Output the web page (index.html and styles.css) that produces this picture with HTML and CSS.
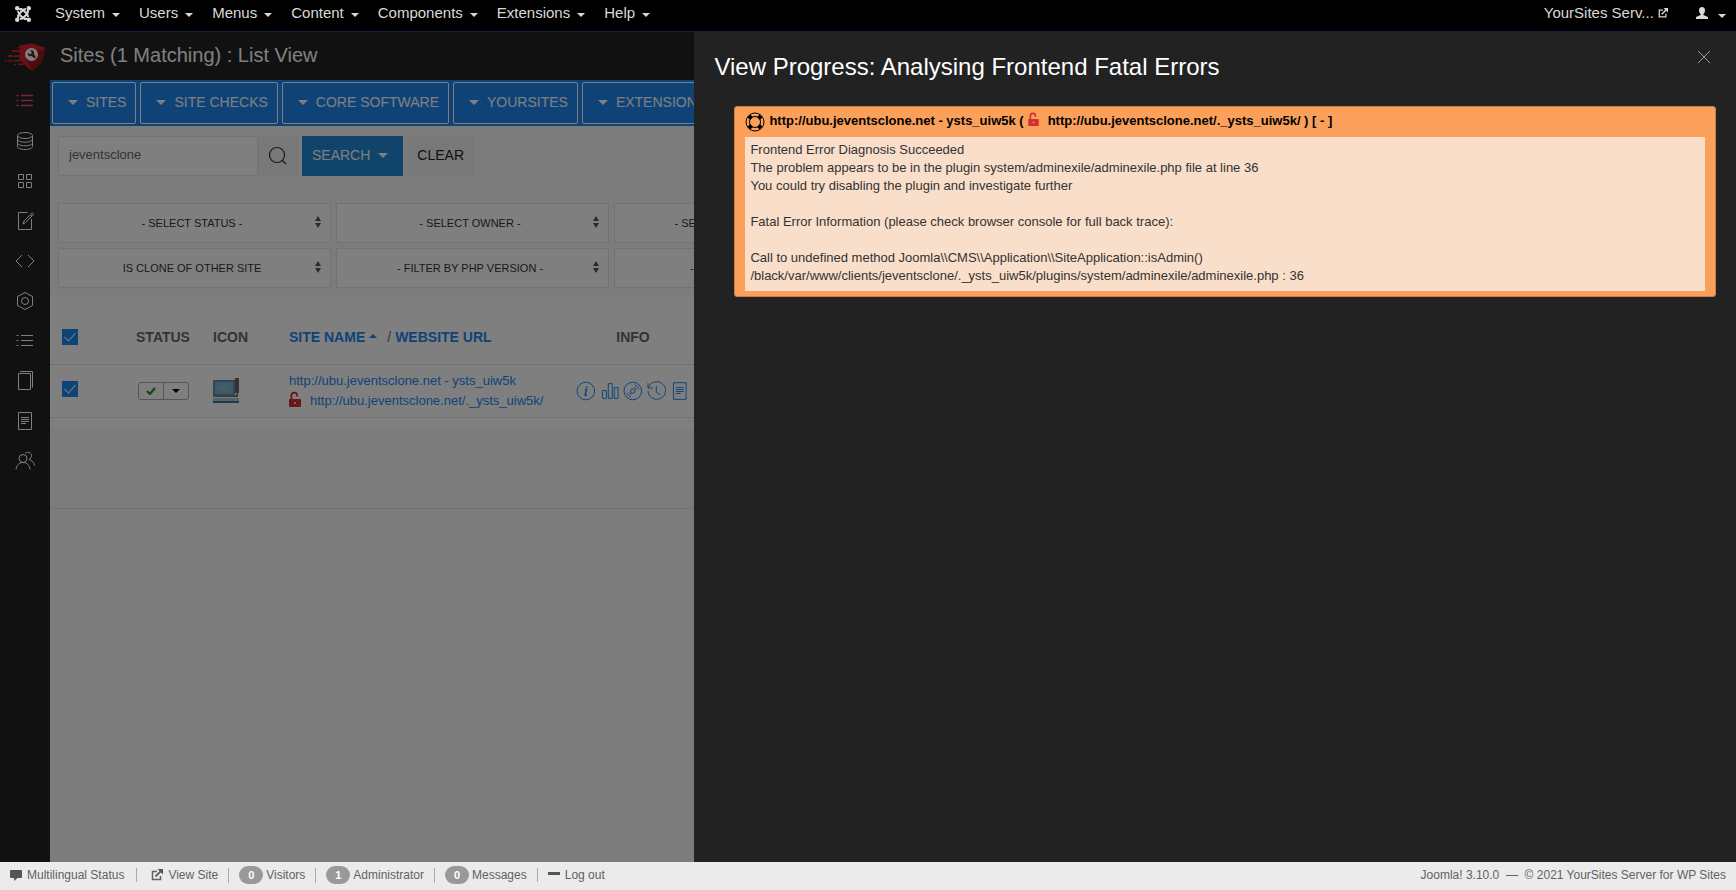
FILE: index.html
```html
<!DOCTYPE html>
<html lang="en">
<head>
  <meta charset="UTF-8" />
  <meta name="viewport" content="width=device-width, initial-scale=1.0"/>
  <title>Sites : List View</title>
  <link rel="stylesheet" href="styles.css">
</head>
<body>

<!-- shared icons -->
<svg class="sprite" aria-hidden="true">
  <symbol id="i-list" viewBox="0 0 20 20"><path d="M6 4.500h12M6 9.500h12M6 14.500h12M1.500 4.500h2M1.500 9.500h2M1.500 14.500h2"/></symbol>
  <symbol id="i-doc" viewBox="0 0 20 20"><path d="M3.500 1.500h13v17h-13zM6 6.500h8M6 8.500h8M6 10.500h8M6 12.500h5"/></symbol>
  <symbol id="i-lock" viewBox="0 0 12 16"><path d="M1.500 8V4.500a3.800 3.800 0 0 1 7.600 0v1H7.300v-1a2 2 0 0 0-4 0V8H11a1 1 0 0 1 1 1v6a1 1 0 0 1-1 1H1a1 1 0 0 1-1-1V9a1 1 0 0 1 1-1zm3.700 3v1.800h1.600V11z"/></symbol>
  <symbol id="i-out" viewBox="0 0 12 12"><path d="M6 2.500H1.500v8h8V7" fill="none" stroke="currentColor" stroke-width="1.500"/><path d="M4.500 7.500 9.500 2.500" stroke="currentColor" stroke-width="1.800"/><path d="M6.500 0H12v5.500z"/></symbol>
  <symbol id="i-updown" viewBox="0 0 6 12"><path d="M3 0l3 5H0zM3 12l3-5H0z"/></symbol>
</svg>

<header class="topbar">
  <a class="brand" href="#" aria-label="Joomla">
    <svg viewBox="0 0 16 16" width="16" height="16" fill="none" stroke="currentColor">
      <path d="M3 5c0 2 .5 2.500 2 4l4 4M13 11c0-2-.5-2.500-2-4L7 3M5 13c2 0 2.500-.5 4-2l4-4M11 3C9 3 8.500 3.500 7 5L3 9" stroke-width="1.800"/>
      <path d="M2 2l4 2M14 2l-2 4M14 14l-4-2M2 14l2-4M5 3h2M13 5v2M11 13H9M3 11V9" stroke-width="1.800"/>
      <g fill="currentColor" stroke="none"><circle cx="2.200" cy="2.200" r="2.200"/><circle cx="13.800" cy="2.200" r="2.200"/><circle cx="2.200" cy="13.800" r="2.200"/><circle cx="13.800" cy="13.800" r="2.200"/></g>
    </svg>
  </a>
  <nav class="menu">
    <a href="#">System<i class="caret"></i></a>
    <a href="#">Users<i class="caret"></i></a>
    <a href="#">Menus<i class="caret"></i></a>
    <a href="#">Content<i class="caret"></i></a>
    <a href="#">Components<i class="caret"></i></a>
    <a href="#">Extensions<i class="caret"></i></a>
    <a href="#">Help<i class="caret"></i></a>
  </nav>
  <div class="topbar-right">
    <a href="#">YourSites Serv... <svg class="out" width="10" height="10"><use href="#i-out"/></svg></a>
    <a class="user" href="#" aria-label="User menu">
      <svg viewBox="0 0 12 12" width="12" height="12"><path d="M6 0c2 0 3 1.300 3 3.200C9 5 8.300 6.300 7.400 7v1L12 10v2H0v-2l4.600-2V7C3.700 6.300 3 5 3 3.200 3 1.300 4 0 6 0z"/></svg>
      <i class="caret"></i>
    </a>
  </div>
</header>

<div class="page">
  <aside class="sidebar">
    <a class="logo" href="#" aria-label="YourSites">
      <svg viewBox="0 0 40 28" width="40" height="28">
        <path d="M27 0c4 2 8 3.500 12.500 4C40 14 36 23 27 27.500c-3-1.500-5-3.500-6.500-5.500H13v-1.500h5l-1-2H8V17h7l-1-3H9v-2h6l-1-3H7V7h8V5.500h-2V4h2V1.500C19 2 23 1.500 27 0z" fill="#d2232d"/>
        <path d="M0 17h2v1.500H0zM3.500 17H7v1.500H3.500zM3 12h5v2H3zM9 21h2v1.500H9z" fill="#d2232d"/>
        <path d="M31.500 8l8-1c-.5 9-5 17-12.500 20.500L20.500 16z" fill="#9b1620"/>
        <circle cx="26.500" cy="11.500" r="6.500" fill="#fff"/>
        <path d="M23 9.500l2 2 2-2-2-2c3-1 5 1.500 4 3.500l2 3-1.500 1.500-3-2.500c-2.500 1-4.500-1-3.500-3.500z" fill="#7a2028"/>
      </svg>
    </a>
    <a class="active" href="#" aria-label="Sites"><svg><use href="#i-list"/></svg></a>
    <a href="#" aria-label="Servers"><svg viewBox="0 0 20 20"><ellipse cx="10" cy="4.500" rx="7.500" ry="3"/><path d="M2.500 4.500v11c0 1.700 3.400 3 7.500 3s7.500-1.300 7.500-3v-11M2.500 8.200c0 1.700 3.400 3 7.500 3s7.500-1.300 7.500-3M2.500 11.800c0 1.700 3.400 3 7.500 3s7.500-1.300 7.500-3"/></svg></a>
    <a href="#" aria-label="Extensions"><svg viewBox="0 0 20 20"><path d="M3.500 3.500h5v5h-5zM11.500 3.500h5v5h-5zM3.500 11.500h5v5h-5zM11.500 11.500h5v5h-5z"/></svg></a>
    <a href="#" aria-label="Edit"><svg viewBox="0 0 20 20"><path d="M12.500 1.500h-9v17h13V8M8 13l1.200-3.200 8-8 1.500 1.500-8 8zM15.500 3.500 17 5"/></svg></a>
    <a href="#" aria-label="Code"><svg viewBox="0 0 20 20"><path d="M7 4 1 10l6 6M13 4l6 6-6 6"/></svg></a>
    <a href="#" aria-label="Settings"><svg viewBox="0 0 20 20"><path d="M10 1.500l7.500 4v9l-7.500 4-7.500-4v-9z"/><circle cx="10" cy="10" r="3.500"/></svg></a>
    <a href="#" aria-label="Logs"><svg><use href="#i-list"/></svg></a>
    <a href="#" aria-label="Copies"><svg viewBox="0 0 20 20"><path d="M3.500 2.500h12v16h-12zM5 .5h12.500v16"/></svg></a>
    <a href="#" aria-label="Reports"><svg><use href="#i-doc"/></svg></a>
    <a href="#" aria-label="Users"><svg viewBox="0 0 20 20"><circle cx="8" cy="7.500" r="4"/><path d="M1 18.500c.5-4 3-7 7-7s6.500 3 7 7M10 2.500c1.500-2 6.500-1.500 6.500 2 0 2-1 3-2.500 4 3 .7 5 3 5.500 6"/></svg></a>
  </aside>

  <main class="content">
    <h1>Sites (1 Matching) : List View</h1>

    <div class="toolbar">
      <button><i class="arrow"></i>SITES</button>
      <button><i class="arrow"></i>SITE CHECKS</button>
      <button><i class="arrow"></i>CORE SOFTWARE</button>
      <button><i class="arrow"></i>YOURSITES</button>
      <button><i class="arrow"></i>EXTENSIONS</button>
    </div>

    <form class="search">
      <input type="text" aria-label="Search" value="jeventsclone">
      <button type="button" class="glass" aria-label="Find"><svg viewBox="0 0 20 20" width="20" height="20"><circle cx="9" cy="9" r="7.500"/><path d="M14 14l4 4"/></svg></button>
      <button type="button" class="go">SEARCH<i class="arrow"></i></button>
      <button type="button" class="clear">CLEAR</button>
    </form>

    <div class="filters">
      <label><select aria-label="Status"><option>- SELECT STATUS -</option></select><svg><use href="#i-updown"/></svg></label>
      <label><select aria-label="Owner"><option>- SELECT OWNER -</option></select><svg><use href="#i-updown"/></svg></label>
      <label><select aria-label="Category"><option>- SELECT SITE CATEGORY -</option></select><svg><use href="#i-updown"/></svg></label>
      <label><select aria-label="Clone"><option>IS CLONE OF OTHER SITE</option></select><svg><use href="#i-updown"/></svg></label>
      <label><select aria-label="PHP version"><option>- FILTER BY PHP VERSION -</option></select><svg><use href="#i-updown"/></svg></label>
      <label><select aria-label="Template"><option>- SELECT TEMPLATE -</option></select><svg><use href="#i-updown"/></svg></label>
    </div>

    <div class="list">
      <table>
        <thead>
          <tr>
            <th class="c-check"><input type="checkbox" aria-label="Select all" checked></th>
            <th class="c-status">STATUS</th>
            <th class="c-icon">ICON</th>
            <th class="c-name"><a href="#">SITE NAME<i class="up"></i></a><span class="slash">/</span><a href="#">WEBSITE URL</a></th>
            <th class="c-info">INFO</th>
            <th></th>
          </tr>
        </thead>
        <tbody>
          <tr>
            <td class="c-check"><input type="checkbox" aria-label="Select site" checked></td>
            <td class="c-status">
              <div class="state">
                <button aria-label="Enabled"><svg viewBox="0 0 10 8" width="10" height="8"><path d="M1 4l3 3 5-6" fill="none" stroke="#2b8a2b" stroke-width="2.200"/></svg></button>
                <button aria-label="More"><i class="caret"></i></button>
              </div>
            </td>
            <td class="c-icon">
              <svg viewBox="0 0 26 26" width="26" height="26">
                <path d="M22 0h4v15h-4z" fill="#666"/>
                <path d="M0 2h22v17H0z" fill="#5c8fb0"/>
                <path d="M2 4h18v12H2z" fill="#81b2cf"/>
                <path d="M4 8h2M9 8h2M14 8h2M6 11h8" stroke="#a9cbdd"/>
                <path d="M3 18h19l3-4v5H3z" fill="#706a66"/>
                <path d="M0 20h26v3H0z" fill="#a9c4d4"/>
                <path d="M0 23h26v2H0z" fill="#427494"/>
              </svg>
            </td>
            <td class="c-name">
              <a href="#">http://ubu.jeventsclone.net - ysts_uiw5k</a>
              <a href="#"><svg class="lock" width="12" height="16"><use href="#i-lock"/></svg>http://ubu.jeventsclone.net/._ysts_uiw5k/</a>
            </td>
            <td class="c-info">
              <div class="tools">
                <svg viewBox="0 0 20 20"><circle cx="10" cy="10" r="9"/><path d="M9 8.500h1.700L9.300 14c-.2.700.5.700 1.700-.3M11 5.200v1.600" stroke-width="1.600"/></svg>
                <svg viewBox="0 0 20 20"><path d="M2.500 9.500h4v8h-4zM8.500 2.500h4v15h-4zM14.500 6.500h4v11h-4z"/></svg>
                <svg viewBox="0 0 20 20"><circle cx="10" cy="10" r="9"/><circle cx="10" cy="10" r="2.200"/><path d="M11.500 6.500c1 .2 1.900 1 2.200 2.100M12 4c2 .5 3.500 2 4.200 4M8.500 13.500c-1-.2-1.900-1-2.200-2.100M8 16c-2-.5-3.500-2-4.200-4"/></svg>
                <svg viewBox="0 0 20 20"><path d="M1 2v5h5M1.500 6.500A9 9 0 1 1 1 10M9.500 5v6l4 3"/></svg>
                <svg viewBox="0 0 20 20"><use href="#i-doc"/></svg>
              </div>
            </td>
            <td></td>
          </tr>
        </tbody>
      </table>
    </div>
    <div class="pager"></div>
  </main>

  <div class="backdrop"></div>

  <section class="drawer" role="dialog" aria-labelledby="drawer-title">
    <button class="close" aria-label="Close"><svg viewBox="0 0 14 14" width="14" height="14"><path d="M1 1l12 12M13 1 1 13"/></svg></button>
    <h2 id="drawer-title">View Progress: Analysing Frontend Fatal Errors</h2>
    <div class="card">
      <div class="card-title">
        <svg class="ring" viewBox="0 0 20 20" width="20" height="20" fill="none" stroke="#000">
          <circle cx="10" cy="10" r="9"/><circle cx="10" cy="10" r="5.500"/>
          <g stroke-width="4"><path d="M4 4l2.500 2.500M16 4l-2.500 2.500M4 16l2.500-2.500M16 16l-2.500-2.500"/></g>
        </svg>
        <strong>http://ubu.jeventsclone.net - ysts_uiw5k (<svg class="lock" width="11" height="14"><use href="#i-lock"/></svg>http://ubu.jeventsclone.net/._ysts_uiw5k/ ) [ - ]</strong>
      </div>
      <div class="card-body">
        Frontend Error Diagnosis Succeeded<br>
        The problem appears to be in the plugin system/adminexile/adminexile.php file at line 36<br>
        You could try disabling the plugin and investigate further<br>
        <br>
        Fatal Error Information (please check browser console for full back trace):<br>
        <br>
        Call to undefined method Joomla\\CMS\\Application\\SiteApplication::isAdmin()<br>
        /black/var/www/clients/jeventsclone/._ysts_uiw5k/plugins/system/adminexile/adminexile.php : 36
      </div>
    </div>
  </section>
</div>

<footer class="statusbar">
  <a href="#"><svg viewBox="0 0 12 12" width="12" height="12"><path d="M1 1h10a1 1 0 0 1 1 1v6a1 1 0 0 1-1 1H7.500L4 12V9H1a1 1 0 0 1-1-1V2a1 1 0 0 1 1-1z"/></svg>Multilingual Status</a>
  <a class="view" href="#"><svg width="12" height="12"><use href="#i-out"/></svg>View Site</a>
  <span><b>0</b>Visitors</span>
  <span><b>1</b>Administrator</span>
  <a href="#"><b>0</b>Messages</a>
  <a href="#"><svg viewBox="0 0 12 12" width="12" height="12"><path d="M0 3h12v3H0z"/></svg>Log out</a>
  <p>Joomla! 3.10.0 &nbsp;—&nbsp; © 2021 YourSites Server for WP Sites</p>
</footer>

</body>
</html>
```
FILE: styles.css
```css
* {
  box-sizing: border-box;
}
body {
  margin: 0;
  height: 100vh;
  display: flex;
  flex-direction: column;
  overflow: hidden;
  font-family: "Liberation Sans", Arial, sans-serif;
  font-size: 13px;
  color: #333;
}
a {
  color: inherit;
  text-decoration: none;
}
button, input, select {
  font-family: inherit;
  margin: 0;
}
button {
  cursor: pointer;
}
.sprite {
  position: absolute;
  width: 0;
  height: 0;
}
.caret {
  display: inline-block;
  border: 4px solid transparent;
  border-top-color: currentColor;
  border-bottom: 0;
}
.arrow {
  display: inline-block;
  border: 5px solid transparent;
  border-top-color: currentColor;
  border-bottom: 0;
}

/* top menu */
.topbar {
  flex: none;
  height: 32px;
  display: flex;
  align-items: center;
  padding: 0 6px 6px 15px;
  background: #000;
  border-bottom: 1px solid #10203a;
  color: #d9d9d9;
  fill: currentColor;
  font-size: 15px;
}
.brand {
  display: flex;
  margin: 3px 24px 0 0;
}
.menu {
  display: flex;
  gap: 19px;
  flex: 1;
}
.menu .caret {
  margin: 0 0 1px 7px;
}
.topbar-right {
  display: flex;
  align-items: center;
  gap: 28px;
}
.user {
  display: flex;
  align-items: flex-end;
  gap: 10px;
}
.user .caret {
  margin: 0 4px 1px 0;
}

/* page */
.page {
  flex: 1;
  min-height: 0;
  display: flex;
  position: relative;
  overflow: hidden;
}
.sidebar {
  flex: none;
  width: 50px;
  background: #222;
  padding-top: 9px;
}
.sidebar a {
  display: flex;
  align-items: center;
  justify-content: center;
  height: 40px;
  color: #fff;
}
.sidebar svg {
  width: 20px;
  height: 20px;
  fill: none;
  stroke: currentColor;
}
.sidebar .logo {
  height: 32px;
  margin-bottom: 8px;
}
.sidebar .logo svg {
  width: 40px;
  height: 28px;
  stroke: none;
}
.sidebar .active {
  color: #f0506e;
}
.sidebar .active svg {
  stroke-width: 1.5;
}
.content {
  flex: 1;
  min-width: 0;
  background: #f8f8f8;
}
.content h1 {
  margin: 0;
  height: 48px;
  padding-left: 10px;
  background: #222;
  color: #fff;
  font-size: 20px;
  font-weight: normal;
  line-height: 46px;
}
.toolbar {
  display: flex;
  gap: 4px;
  padding: 2px;
  background: #1e87f0;
}
.toolbar button {
  height: 42px;
  padding: 0 9px 2px 15px;
  display: flex;
  align-items: center;
  border: 1px solid #fff;
  border-radius: 2px;
  background: none;
  color: #fff;
  font-size: 14px;
}
.toolbar .arrow {
  margin-right: 8px;
}
.search {
  display: flex;
  padding: 10px 8px 27px;
}
.search input {
  width: 200px;
  height: 40px;
  padding: 0 10px 3px;
  border: 1px solid #e5e5e5;
  background: #fff;
  color: #666;
  font-size: 13px;
}
.search button {
  height: 40px;
  padding: 0 10px 2px;
  border: 0;
  font-size: 14px;
}
.search .glass {
  width: 40px;
  background: #f1f1f1;
  fill: none;
  stroke: #333;
  stroke-width: 1.2;
}
.search .glass svg {
  display: block;
  margin-top: 2px;
}
.search .go {
  display: flex;
  align-items: center;
  gap: 8px;
  margin: 0 4px;
  padding-right: 15px;
  background: #2088d6;
  color: #fff;
}
.search .clear {
  background: #f1f1f1;
  color: #222;
}
.filters {
  display: grid;
  grid-template-columns: repeat(6, 273px);
  gap: 5px;
  padding: 0 8px 7px;
  overflow: hidden;
}
.filters label:nth-child(4) {
  grid-column: 1;
}
.filters label {
  position: relative;
}
.filters select {
  display: block;
  width: 100%;
  height: 40px;
  padding: 0 10px 0 5px;
  appearance: none;
  border: 1px solid #e5e5e5;
  border-radius: 0;
  background: #fff;
  color: #333;
  font-size: 11px;
  text-align: center;
  text-align-last: center;
}
.filters svg {
  position: absolute;
  top: 13px;
  right: 10px;
  width: 6px;
  height: 12px;
  fill: #555;
}

/* table */
.list {
  background: #fff;
  padding-bottom: 12px;
}
table {
  width: 100%;
  table-layout: fixed;
  border-collapse: collapse;
}
th, td {
  padding: 0;
  border-bottom: 1px solid #e5e5e5;
}
th {
  height: 69px;
  padding-top: 16px;
  color: #666;
  font-size: 14px;
}
td {
  height: 53px;
}
.c-check {
  width: 78px;
  padding-left: 12px;
  text-align: left;
}
td.c-check {
  padding-bottom: 4px;
}
.c-status {
  width: 70px;
  text-align: center;
}
.c-icon {
  width: 56px;
  padding-left: 15px;
  text-align: left;
}
.c-name {
  width: 322px;
  padding-left: 35px;
  text-align: left;
  white-space: nowrap;
}
.c-info {
  width: 114px;
}
.c-name a {
  color: #1e87f0;
}
td.c-name a {
  display: block;
  line-height: 20px;
}
td.c-icon svg {
  display: block;
}
input[type="checkbox"] {
  appearance: none;
  display: block;
  width: 16px;
  height: 16px;
  background: #1e87f0;
}
input[type="checkbox"]::after {
  content: "";
  display: block;
  width: 5px;
  height: 10px;
  margin: 1px auto 0;
  border: solid #fff;
  border-width: 0 1px 1px 0;
  transform: rotate(42deg);
}
.up {
  display: inline-block;
  margin: 0 0 4px 4px;
  border: 4px solid transparent;
  border-top: 0;
  border-bottom-color: currentColor;
}
.slash {
  margin: 0 4px 0 10px;
  font-weight: normal;
}
.state {
  display: flex;
  width: 51px;
  height: 18px;
  margin: 0 auto;
  border: 1px solid #aaa;
  border-radius: 3px;
}
.state button {
  flex: 1;
  padding: 0;
  display: flex;
  align-items: center;
  justify-content: center;
  border: 0;
  background: none;
  color: #000;
}
.state button + button {
  border-left: 1px solid #aaa;
}
.lock {
  fill: #d32f2f;
}
.c-name .lock {
  margin-right: 9px;
  vertical-align: -2px;
}
.tools {
  display: flex;
  gap: 4px;
}
.tools svg {
  width: 20px;
  height: 20px;
  fill: none;
  stroke: #1e87f0;
}
.pager {
  height: 79px;
  border-bottom: 1px solid #e5e5e5;
}

/* drawer */
.backdrop {
  position: absolute;
  inset: 0;
  background: rgba(0, 0, 0, 0.5);
}
.drawer {
  position: absolute;
  top: 0;
  right: 0;
  bottom: 0;
  width: 60%;
  padding: 20px;
  background: #222;
}
.drawer h2 {
  margin: 0 0 24px;
  color: #fff;
  font-size: 24px;
  font-weight: normal;
  line-height: 30px;
}
.close {
  position: absolute;
  top: 18px;
  right: 25px;
  padding: 0;
  border: 0;
  background: none;
  stroke: #999;
}
.close svg {
  display: block;
}
.card {
  margin-left: 20px;
  padding: 5px 10px;
  border: 1px solid #c98048;
  border-radius: 3px;
  background: #faa05a;
}
.card-title {
  display: flex;
  gap: 4px;
  height: 25px;
  color: #000;
  line-height: 18px;
}
.card-title .lock {
  margin: 0 9px 0 4px;
  vertical-align: -1px;
}
.card-body {
  padding: 4px 5px 6px;
  background: #f9dec9;
  line-height: 18px;
}

/* status bar */
.statusbar {
  flex: none;
  height: 28px;
  display: flex;
  align-items: center;
  padding: 0 10px 2px;
  background: #ebebeb;
  color: #626262;
  fill: #555;
  font-size: 12px;
}
.statusbar a, .statusbar span {
  display: flex;
  align-items: center;
}
.statusbar a + a,
.statusbar a + span,
.statusbar span + span,
.statusbar span + a {
  margin-left: 10px;
  padding-left: 11px;
  background: linear-gradient(#aaa, #aaa) left center / 1px 15px no-repeat;
}
.statusbar svg {
  margin-right: 5px;
}
.statusbar .view {
  margin-left: 12px;
  padding-left: 15px;
}
.statusbar b {
  width: 24px;
  margin-right: 3px;
  border-radius: 9px;
  background: #999;
  color: #fff;
  font-size: 11px;
  line-height: 18px;
  text-align: center;
}
.statusbar p {
  margin: 0 0 0 auto;
}
```
